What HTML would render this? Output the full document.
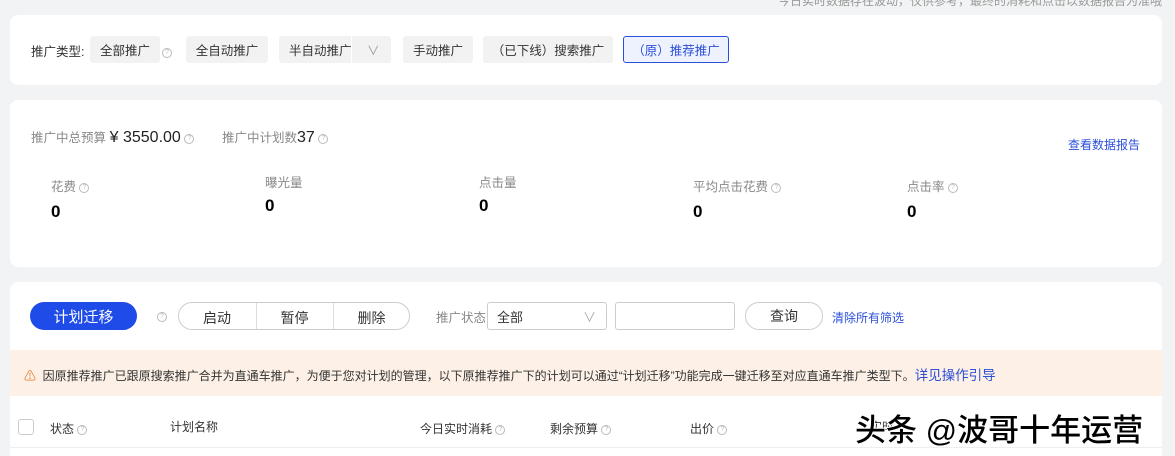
<!DOCTYPE html>
<html><head><meta charset="utf-8"><style>
*{margin:0;padding:0;box-sizing:border-box}
html,body{width:1175px;height:456px;overflow:hidden}
body{background:#f2f3f4;font-family:"Liberation Sans","Noto Sans CJK SC",sans-serif;font-size:13px;color:#333;position:relative}
.a{position:absolute;white-space:nowrap}
.card{position:absolute;background:#fff;border-radius:8px;left:10px;width:1152px}
.tag{position:absolute;top:36px;height:27px;display:flex;align-items:center;justify-content:center;background:#f2f2f2;border-radius:3px;font-size:12.5px;color:#333;white-space:nowrap}
.q{display:inline-block;width:10px;height:10px;border:1px solid #bbb;border-radius:50%;font-size:7px;line-height:8px;text-align:center;color:#bbb;vertical-align:middle}
.g{color:#888;font-size:12.5px}
.n{font-weight:bold;font-size:17px;color:#000}
.btn{position:absolute;border:1px solid #ccc;background:#fff;display:flex;align-items:center;justify-content:center;font-size:14px}
</style></head><body>
<div class="a" style="left:778px;top:-8px;font-size:12px;color:#999">今日实时数据存在波动，仅供参考，最终的消耗和点击以数据报告为准哦</div>

<div class="card" style="top:15px;height:70px"></div>
<div class="a" style="left:31px;top:41px;font-size:12.5px">推广类型:</div>
<div class="tag" style="left:90px;width:70px">全部推广</div>
<div class="a" style="left:162px;top:44px"><span class="q">?</span></div>
<div class="tag" style="left:186px;width:82px">全自动推广</div>
<div class="tag" style="left:279px;width:112px;justify-content:flex-start;padding-left:10px">半自动推广<span style="position:absolute;left:72px;top:0;width:1px;height:27px;background:#fff"></span><span style="position:absolute;left:88px;color:#999">∨</span></div>
<div class="tag" style="left:403px;width:70px">手动推广</div>
<div class="tag" style="left:483px;width:130px">（已下线）搜索推广</div>
<div class="tag" style="left:623px;width:106px;background:#eef2fe;border:1px solid #2c4fd8;color:#2c4fd8">（原）推荐推广</div>

<div class="card" style="top:100px;height:167px"></div>
<div class="a" style="left:31px;top:127px"><span class="g">推广中总预算</span> <span style="font-size:16px;color:#222">¥ 3550.00</span> <span class="q">?</span></div>
<div class="a" style="left:222px;top:127px"><span class="g">推广中计划数</span><span style="font-size:16px;color:#222">37</span> <span class="q">?</span></div>
<div class="a" style="left:1068px;top:136px;color:#2c4fd8;font-size:12px">查看数据报告</div>
<div class="a g" style="left:51px;top:176px">花费 <span class="q">?</span></div><div class="a n" style="left:51px;top:202px">0</div>
<div class="a g" style="left:265px;top:172px">曝光量</div><div class="a n" style="left:265px;top:196px">0</div>
<div class="a g" style="left:479px;top:172px">点击量</div><div class="a n" style="left:479px;top:196px">0</div>
<div class="a g" style="left:693px;top:176px">平均点击花费 <span class="q">?</span></div><div class="a n" style="left:693px;top:202px">0</div>
<div class="a g" style="left:907px;top:176px">点击率 <span class="q">?</span></div><div class="a n" style="left:907px;top:202px">0</div>

<div class="card" style="top:282px;height:174px;border-radius:8px 8px 0 0"></div>
<div class="a" style="left:30px;top:302px;width:107px;height:28px;border-radius:14px;background:#1f4be8;color:#fff;font-size:15px;display:flex;align-items:center;justify-content:center">计划迁移</div>
<div class="a" style="left:157px;top:308px"><span class="q">?</span></div>
<div class="btn" style="left:178px;top:302px;width:232px;height:28px;border-radius:14px"></div>
<div class="a" style="left:178px;top:308px;width:78px;text-align:center;font-size:14px">启动</div>
<div class="a" style="left:256px;top:303px;width:1px;height:26px;background:#ddd"></div>
<div class="a" style="left:256px;top:308px;width:77px;text-align:center;font-size:14px">暂停</div>
<div class="a" style="left:333px;top:303px;width:1px;height:26px;background:#ddd"></div>
<div class="a" style="left:333px;top:308px;width:77px;text-align:center;font-size:14px">删除</div>
<div class="a g" style="left:436px;top:307px">推广状态:</div>
<div class="btn" style="left:487px;top:302px;width:120px;height:28px;border-radius:3px;justify-content:flex-start;padding-left:9px;font-size:13px">全部<span style="position:absolute;right:10px;color:#aaa">∨</span></div>
<div class="btn" style="left:615px;top:302px;width:120px;height:28px;border-radius:3px"></div>
<div class="btn" style="left:745px;top:302px;width:78px;height:28px;border-radius:14px">查询</div>
<div class="a" style="left:832px;top:309px;color:#2c4fd8;font-size:12px">清除所有筛选</div>

<div class="a" style="left:10px;top:350px;width:1152px;height:46px;background:#fdf0e6"></div>
<div class="a" style="left:24px;top:364px;font-size:12px;color:#333"><span style="color:#e07b2a">⚠</span>&nbsp; 因原推荐推广已跟原搜索推广合并为直通车推广，为便于您对计划的管理，以下原推荐推广下的计划可以通过“计划迁移”功能完成一键迁移至对应直通车推广类型下。<span style="color:#2c4fd8;font-size:13.5px">详见操作引导</span></div>

<div class="a" style="left:18px;top:419px;width:16px;height:16px;border:1px solid #ccc;border-radius:3px"></div>
<div class="a" style="left:50px;top:420px;font-size:12px">状态 <span class="q">?</span></div>
<div class="a" style="left:170px;top:418px;font-size:12px">计划名称</div>
<div class="a" style="left:420px;top:420px;font-size:12px">今日实时消耗 <span class="q">?</span></div>
<div class="a" style="left:550px;top:420px;font-size:12px">剩余预算 <span class="q">?</span></div>
<div class="a" style="left:690px;top:420px;font-size:12px">出价 <span class="q">?</span></div>
<div class="a" style="left:870px;top:418px;font-size:12px">实时</div>
<div class="a" style="left:10px;top:447px;width:1152px;height:1px;background:#eee"></div>
<div class="a" style="left:855px;top:405px;font-size:31px;color:#000;font-weight:500;-webkit-text-stroke:2px #fff;paint-order:stroke fill">头条 @波哥十年运营</div>
</body></html>
